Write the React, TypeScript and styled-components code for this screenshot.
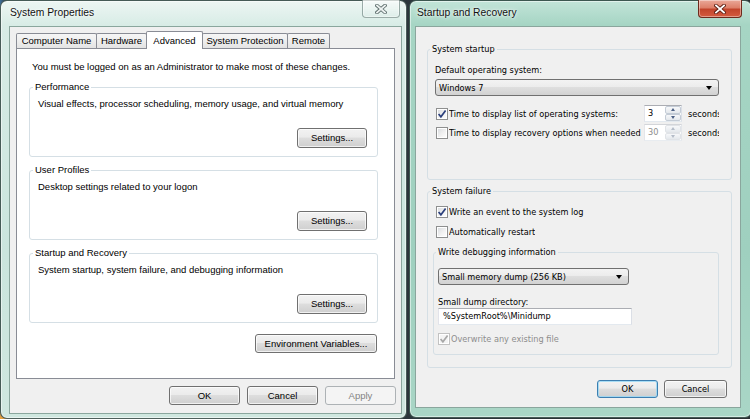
import React from 'react'
import styled, { createGlobalStyle } from 'styled-components'

const segoe = `'Liberation Sans', Arial, sans-serif`
const tahoma = `'DejaVu Sans', Verdana, sans-serif`

const GlobalStyle = createGlobalStyle`
  html, body {
    margin: 0;
    padding: 0;
    width: 750px;
    height: 419px;
    overflow: hidden;
  }
  body {
    font-family: ${segoe};
    background: #2c3439;
  }
`

const Desktop = styled.div`
  display: flex;
  gap: 2px;
  width: 750px;
  height: 419px;
  overflow: hidden;
  background:
    radial-gradient(circle at 0 100%, #f0a43a 0, rgba(240, 164, 58, 0) 28px),
    linear-gradient(90deg, #3f6f9a 0, #2e3d45 6px, #2a2f33 100%);
`

const Window = styled.div<{ $active?: boolean; $w: number; $h: number }>`
  flex: none;
  box-sizing: border-box;
  width: ${(p) => p.$w}px;
  height: ${(p) => p.$h}px;
  display: flex;
  flex-direction: column;
  border: 1px solid rgba(24, 44, 40, 0.75);
  border-radius: 7px;
  box-shadow: inset 0 0 0 1px rgba(255, 255, 255, 0.5);
  background: ${(p) =>
    p.$active
      ? 'linear-gradient(180deg, #c2e4d8 0, #a6d5c4 24px, #9fd0bf 60%, #a9d6c6 100%)'
      : 'linear-gradient(180deg, #edf6f3 0, #d8ece6 24px, #cae5dd 60%, #cfe7df 100%)'};
`

const TitleBar = styled.div`
  flex: none;
  height: 25px;
  display: flex;
  justify-content: space-between;
  align-items: flex-start;
`

const Title = styled.div<{ $x: number }>`
  margin: 5px 0 0 ${(p) => p.$x}px;
  font-family: ${segoe};
  font-size: 10.3px;
  line-height: 14px;
  color: #111;
  text-shadow: 0 0 5px rgba(255, 255, 255, 0.95), 0 0 2px rgba(255, 255, 255, 0.9);
`

const CloseButton = styled.div<{ $active?: boolean; $w: number; $mr: number }>`
  flex: none;
  box-sizing: border-box;
  width: ${(p) => p.$w}px;
  height: 18px;
  margin: -1px ${(p) => p.$mr}px 0 0;
  display: flex;
  align-items: center;
  justify-content: center;
  border: 1px solid ${(p) => (p.$active ? '#6e2a1c' : 'rgba(70, 96, 92, 0.5)')};
  border-top: none;
  border-radius: 0 0 4px 4px;
  background: ${(p) =>
    p.$active
      ? 'linear-gradient(180deg, #eaa999 0, #dd806a 45%, #c2452c 55%, #d45b3f 100%)'
      : 'linear-gradient(180deg, rgba(255,255,255,0.55), rgba(220,236,232,0.35))'};
  box-shadow: inset 0 0 0 1px rgba(255, 255, 255, 0.4);
`

const CloseGlyph = ({ active }: { active?: boolean }) => (
  <svg width="12" height="10" viewBox="0 0 12 10">
    <path
      d="M2 1.5 L10 8.5 M10 1.5 L2 8.5"
      stroke={active ? '#5a1c10' : '#5f6f6e'}
      strokeWidth="3.6"
      strokeLinecap="square"
    />
    <path
      d="M2 1.5 L10 8.5 M10 1.5 L2 8.5"
      stroke={active ? '#ffffff' : '#eef3f2'}
      strokeWidth="1.8"
      strokeLinecap="square"
    />
  </svg>
)

const Client = styled.div<{ $m: string; $tahoma?: boolean }>`
  flex: 1;
  min-height: 0;
  margin: ${(p) => p.$m};
  display: flex;
  flex-direction: column;
  background: #f0f0f0;
  border: 1px solid #8aa69d;
  font-family: ${(p) => (p.$tahoma ? tahoma : segoe)};
  font-size: ${(p) => (p.$tahoma ? '8.2px' : '9.5px')};
  line-height: 12px;
  color: #000;
`

const TabStrip = styled.div`
  display: flex;
  align-items: flex-end;
  height: 17px;
  margin: 4px 0 0 6px;
`

const Tab = styled.div<{ $w: number; $selected?: boolean }>`
  position: relative;
  box-sizing: border-box;
  flex: none;
  width: ${(p) => p.$w}px;
  height: ${(p) => (p.$selected ? 18 : 15)}px;
  margin: 0 0 ${(p) => (p.$selected ? -1 : 0)}px -1px;
  &:first-child {
    margin-left: 0;
  }
  z-index: ${(p) => (p.$selected ? 2 : 1)};
  border: 1px solid #898c95;
  border-bottom: none;
  border-radius: 2px 2px 0 0;
  background: ${(p) => (p.$selected ? '#fff' : 'linear-gradient(180deg, #f6f6f6 0, #eeeeee 50%, #e3e3e3 100%)')};
  display: flex;
  align-items: center;
  justify-content: center;
  white-space: nowrap;
  line-height: 12px;
`

const TabPanel = styled.div`
  box-sizing: border-box;
  height: 331px;
  margin: 0 6px;
  padding: 12px 16px 0 12px;
  background: #fff;
  border: 1px solid #898c95;
`

const Intro = styled.div`
  margin-left: 3px;
`

const Group = styled.fieldset<{ $pad: string; $m: string }>`
  margin: ${(p) => p.$m};
  min-width: 0;
  padding: ${(p) => p.$pad};
  border: 1px solid #d5dfe5;
  border-radius: 3px;
`

const Legend = styled.legend`
  padding: 0 2px;
  line-height: 12px;
`

const Text = styled.div<{ $m?: string; $disabled?: boolean }>`
  margin: ${(p) => p.$m ?? '0'};
  white-space: nowrap;
  color: ${(p) => (p.$disabled ? '#8d8d8d' : '#000')};
`

const ButtonRow = styled.div<{ $m?: string; $gap?: number }>`
  display: flex;
  justify-content: flex-end;
  gap: ${(p) => p.$gap ?? 0}px;
  margin: ${(p) => p.$m ?? '0'};
`

const Button = styled.button<{ $w: number; $h?: number; $default?: boolean }>`
  box-sizing: border-box;
  width: ${(p) => p.$w}px;
  height: ${(p) => p.$h ?? 20}px;
  padding: 0;
  font: inherit;
  line-height: 12px;
  color: #000;
  border: 1px solid ${(p) => (p.$default ? '#3c7fb1' : '#707070')};
  border-radius: 3px;
  background: linear-gradient(180deg, #f2f2f2 0, #ebebeb 45%, #dddddd 50%, #cfcfcf 100%);
  box-shadow: inset 0 0 0 1px ${(p) => (p.$default ? 'rgba(150, 215, 245, 0.8)' : 'rgba(255, 255, 255, 0.7)')};
  &:disabled {
    border-color: #adb2b5;
    background: #f4f4f4;
    color: #838383;
    box-shadow: none;
  }
`

const Combo = styled.div<{ $w: number; $m: string }>`
  box-sizing: border-box;
  width: ${(p) => p.$w}px;
  height: 17px;
  margin: ${(p) => p.$m};
  padding: 0 6px 0 3px;
  display: flex;
  align-items: center;
  justify-content: space-between;
  border: 1px solid #707070;
  border-radius: 3px;
  background: linear-gradient(180deg, #f3f3f3 0, #ececec 45%, #dedede 50%, #d2d2d2 100%);
  white-space: nowrap;
`

const ComboArrow = styled.span`
  width: 0;
  height: 0;
  border-left: 3.5px solid transparent;
  border-right: 3.5px solid transparent;
  border-top: 4px solid #000;
`

const TextInput = styled.div<{ $w: number; $m: string }>`
  box-sizing: border-box;
  width: ${(p) => p.$w}px;
  height: 17px;
  margin: ${(p) => p.$m};
  padding-left: 4px;
  line-height: 15px;
  background: #fff;
  border: 1px solid;
  border-color: #abadb3 #dbdfe6 #e3e9ef #e2e3ea;
  white-space: nowrap;
`

const CheckRow = styled.div<{ $m?: string; $h?: number }>`
  display: flex;
  align-items: center;
  height: ${(p) => p.$h ?? 12}px;
  margin: ${(p) => p.$m ?? '0'};
`

const Box = styled.span<{ $disabled?: boolean }>`
  flex: none;
  box-sizing: border-box;
  width: 12px;
  height: 12px;
  margin-right: 1px;
  display: flex;
  align-items: center;
  justify-content: center;
  border: 1px solid ${(p) => (p.$disabled ? '#c2c2c2' : '#8e8f8f')};
  background: ${(p) =>
    p.$disabled ? '#f4f4f4' : 'linear-gradient(135deg, #d6d9dd 0, #f1f1f1 55%, #ffffff 100%)'};
  box-shadow: inset 0 0 0 1px #fff;
`

const CheckLabel = styled.span<{ $w?: number; $disabled?: boolean }>`
  flex: none;
  width: ${(p) => (p.$w ? `${p.$w}px` : 'auto')};
  white-space: nowrap;
  overflow: hidden;
  color: ${(p) => (p.$disabled ? '#8d8d8d' : '#000')};
`

const CheckBox = ({ checked, disabled }: { checked?: boolean; disabled?: boolean }) => (
  <Box $disabled={disabled}>
    {checked && (
      <svg width="10" height="10" viewBox="0 0 10 10">
        <path
          d="M1.6 5 L3.9 7.8 L8.6 1.6"
          fill="none"
          stroke={disabled ? '#a8a8a8' : '#2b3f7c'}
          strokeWidth="1.7"
        />
      </svg>
    )}
  </Box>
)

const Spin = styled.div<{ $disabled?: boolean }>`
  flex: none;
  box-sizing: border-box;
  display: flex;
  width: 38px;
  height: 17px;
  background: #fff;
  border: 1px solid;
  border-color: ${(p) => (p.$disabled ? '#d3d5d9 #e3e6ea #e8ecf0 #e5e6ea' : '#abadb3 #dbdfe6 #e3e9ef #e2e3ea')};
`

const SpinValue = styled.span<{ $disabled?: boolean }>`
  flex: 1;
  padding-left: 3px;
  line-height: 15px;
  color: ${(p) => (p.$disabled ? '#8d8d8d' : '#000')};
`

const SpinArrows = styled.div`
  flex: none;
  width: 16px;
  display: flex;
  flex-direction: column;
`

const SpinArrow = styled.div<{ $down?: boolean; $disabled?: boolean }>`
  flex: 1;
  display: flex;
  align-items: center;
  justify-content: center;
  border: 1px solid ${(p) => (p.$disabled ? '#e0e3e7' : '#c4ccd6')};
  border-radius: 2px;
  background: linear-gradient(180deg, #f7f8fa, #e4e8ec);
  &::after {
    content: '';
    width: 0;
    height: 0;
    border-left: 2.5px solid transparent;
    border-right: 2.5px solid transparent;
    ${(p) => (p.$down ? 'border-top' : 'border-bottom')}: 3px solid ${(p) => (p.$disabled ? '#b4bcc8' : '#4d6185')};
  }
`

const Seconds = styled.span`
  flex: none;
  width: 31px;
  margin-left: 6px;
  overflow: hidden;
  white-space: nowrap;
`

const tabs = [
  { label: 'Computer Name', w: 81 },
  { label: 'Hardware', w: 51 },
  { label: 'Advanced', w: 57, selected: true },
  { label: 'System Protection', w: 86 },
  { label: 'Remote', w: 43 },
]

const groups = [
  { title: 'Performance', text: 'Visual effects, processor scheduling, memory usage, and virtual memory' },
  { title: 'User Profiles', text: 'Desktop settings related to your logon' },
  { title: 'Startup and Recovery', text: 'System startup, system failure, and debugging information' },
]

const SpinRow = ({
  label,
  value,
  checked,
  disabled,
  m,
}: {
  label: string
  value: string
  checked?: boolean
  disabled?: boolean
  m: string
}) => (
  <CheckRow $h={17} $m={m}>
    <CheckBox checked={checked} />
    <CheckLabel $w={195}>{label}</CheckLabel>
    <Spin $disabled={disabled}>
      <SpinValue $disabled={disabled}>{value}</SpinValue>
      <SpinArrows>
        <SpinArrow $disabled={disabled} />
        <SpinArrow $down $disabled={disabled} />
      </SpinArrows>
    </Spin>
    <Seconds>seconds</Seconds>
  </CheckRow>
)

export default function App() {
  return (
    <>
      <GlobalStyle />
      <Desktop>
        <Window $w={407} $h={419}>
          <TitleBar>
            <Title $x={9}>System Properties</Title>
            <CloseButton $w={38} $mr={6}>
              <CloseGlyph />
            </CloseButton>
          </TitleBar>
          <Client $m="0 4px 4px 8px">
            <TabStrip>
              {tabs.map((t) => (
                <Tab key={t.label} $w={t.w} $selected={t.selected}>
                  {t.label}
                </Tab>
              ))}
            </TabStrip>
            <TabPanel>
              <Intro>You must be logged on as an Administrator to make most of these changes.</Intro>
              {groups.map((g, i) => (
                <Group key={g.title} $m={`${i === 0 ? 8 : 7}px 0 0`} $pad="5px 10px 8px 3px">
                  <Legend>{g.title}</Legend>
                  <Text $m="0 0 0 5px">{g.text}</Text>
                  <ButtonRow $m="18px 0 0">
                    <Button $w={70}>Settings...</Button>
                  </ButtonRow>
                </Group>
              ))}
              <ButtonRow $m="11px 1px 0 0">
                <Button $w={122} $h={19}>
                  Environment Variables...
                </Button>
              </ButtonRow>
            </TabPanel>
            <ButtonRow $m="7px 5px 0 0" $gap={7}>
              <Button $w={71} $h={19}>
                OK
              </Button>
              <Button $w={71} $h={19}>
                Cancel
              </Button>
              <Button $w={71} $h={19} disabled>
                Apply
              </Button>
            </ButtonRow>
          </Client>
        </Window>

        <Window $w={343} $h={418} $active>
          <TitleBar>
            <Title $x={7}>Startup and Recovery</Title>
            <CloseButton $w={44} $mr={9} $active>
              <CloseGlyph active />
            </CloseButton>
          </TitleBar>
          <Client $m="0 10px 9px 5px" $tahoma>
            <Group $m="16px 8px 0 11px" $pad="9px 12px 38px 2px">
              <Legend>System startup</Legend>
              <Text $m="0 0 0 5px">Default operating system:</Text>
              <Combo $w={284} $m="3px 0 0 5px">
                Windows 7
                <ComboArrow />
              </Combo>
              <SpinRow m="9px 0 0 6px" checked label="Time to display list of operating systems:" value="3" />
              <SpinRow
                m="2px 0 0 6px"
                disabled
                label="Time to display recovery options when needed"
                value="30"
              />
            </Group>
            <Group $m="5px 8px 0 11px" $pad="9px 12px 12px 2px">
              <Legend>System failure</Legend>
              <CheckRow $m="0 0 0 6px">
                <CheckBox checked />
                <CheckLabel>Write an event to the system log</CheckLabel>
              </CheckRow>
              <CheckRow $m="8px 0 0 6px">
                <CheckBox />
                <CheckLabel>Automatically restart</CheckLabel>
              </CheckRow>
              <Group $m="8px 0 0 3px" $pad="10px 4px 9px 2px">
                <Legend>Write debugging information</Legend>
                <Combo $w={191} $m="0 0 0 2px">
                  Small memory dump (256 KB)
                  <ComboArrow />
                </Combo>
                <Text $m="11px 0 0 2px">Small dump directory:</Text>
                <TextInput $w={194} $m="0 0 0 2px">
                  %SystemRoot%\Minidump
                </TextInput>
                <CheckRow $m="8px 0 0 2px">
                  <CheckBox checked disabled />
                  <CheckLabel $disabled>Overwrite any existing file</CheckLabel>
                </CheckRow>
              </Group>
            </Group>
            <ButtonRow $m="12px 13px 0 0" $gap={6}>
              <Button $w={61} $h={18} $default>
                OK
              </Button>
              <Button $w={63} $h={18}>
                Cancel
              </Button>
            </ButtonRow>
          </Client>
        </Window>
      </Desktop>
    </>
  )
}
